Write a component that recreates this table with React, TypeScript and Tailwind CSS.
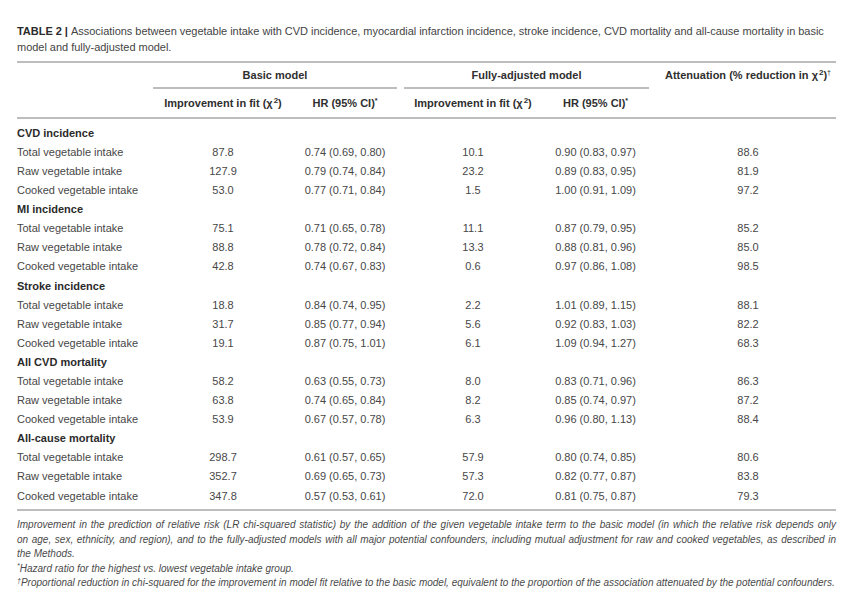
import React from 'react';

type Row = { label: string; bImp: string; bHr: string; fImp: string; fHr: string; att: string };
type Group = { title: string; rows: Row[] };

const GROUPS: Group[] = [
  {
    title: 'CVD incidence',
    rows: [
      { label: 'Total vegetable intake', bImp: '87.8', bHr: '0.74 (0.69, 0.80)', fImp: '10.1', fHr: '0.90 (0.83, 0.97)', att: '88.6' },
      { label: 'Raw vegetable intake', bImp: '127.9', bHr: '0.79 (0.74, 0.84)', fImp: '23.2', fHr: '0.89 (0.83, 0.95)', att: '81.9' },
      { label: 'Cooked vegetable intake', bImp: '53.0', bHr: '0.77 (0.71, 0.84)', fImp: '1.5', fHr: '1.00 (0.91, 1.09)', att: '97.2' },
    ],
  },
  {
    title: 'MI incidence',
    rows: [
      { label: 'Total vegetable intake', bImp: '75.1', bHr: '0.71 (0.65, 0.78)', fImp: '11.1', fHr: '0.87 (0.79, 0.95)', att: '85.2' },
      { label: 'Raw vegetable intake', bImp: '88.8', bHr: '0.78 (0.72, 0.84)', fImp: '13.3', fHr: '0.88 (0.81, 0.96)', att: '85.0' },
      { label: 'Cooked vegetable intake', bImp: '42.8', bHr: '0.74 (0.67, 0.83)', fImp: '0.6', fHr: '0.97 (0.86, 1.08)', att: '98.5' },
    ],
  },
  {
    title: 'Stroke incidence',
    rows: [
      { label: 'Total vegetable intake', bImp: '18.8', bHr: '0.84 (0.74, 0.95)', fImp: '2.2', fHr: '1.01 (0.89, 1.15)', att: '88.1' },
      { label: 'Raw vegetable intake', bImp: '31.7', bHr: '0.85 (0.77, 0.94)', fImp: '5.6', fHr: '0.92 (0.83, 1.03)', att: '82.2' },
      { label: 'Cooked vegetable intake', bImp: '19.1', bHr: '0.87 (0.75, 1.01)', fImp: '6.1', fHr: '1.09 (0.94, 1.27)', att: '68.3' },
    ],
  },
  {
    title: 'All CVD mortality',
    rows: [
      { label: 'Total vegetable intake', bImp: '58.2', bHr: '0.63 (0.55, 0.73)', fImp: '8.0', fHr: '0.83 (0.71, 0.96)', att: '86.3' },
      { label: 'Raw vegetable intake', bImp: '63.8', bHr: '0.74 (0.65, 0.84)', fImp: '8.2', fHr: '0.85 (0.74, 0.97)', att: '87.2' },
      { label: 'Cooked vegetable intake', bImp: '53.9', bHr: '0.67 (0.57, 0.78)', fImp: '6.3', fHr: '0.96 (0.80, 1.13)', att: '88.4' },
    ],
  },
  {
    title: 'All-cause mortality',
    rows: [
      { label: 'Total vegetable intake', bImp: '298.7', bHr: '0.61 (0.57, 0.65)', fImp: '57.9', fHr: '0.80 (0.74, 0.85)', att: '80.6' },
      { label: 'Raw vegetable intake', bImp: '352.7', bHr: '0.69 (0.65, 0.73)', fImp: '57.3', fHr: '0.82 (0.77, 0.87)', att: '83.8' },
      { label: 'Cooked vegetable intake', bImp: '347.8', bHr: '0.57 (0.53, 0.61)', fImp: '72.0', fHr: '0.81 (0.75, 0.87)', att: '79.3' },
    ],
  },
];

// columnas: etiqueta | basic imp | basic HR | hueco | fully imp | fully HR | hueco | atenuación
const COLS = 'grid grid-cols-[136px_140px_104px_7px_138px_107px_11px_176px]';

const Sq = () => <sup className="text-[8px] relative -top-[4px] ml-[1px]">2</sup>;

function Rule() {
  return <div className="h-[2px] w-[819px] bg-[#bdbdbd]" />;
}

export default function App() {
  return (
    <div className="relative w-[865px] h-[603px] bg-white overflow-hidden font-['Liberation_Sans',Arial,sans-serif] text-[#3d3d3d]">
      <div className="pl-[17px] pt-[23px]">
        {/* ── Título ── */}
        <div className="text-[11px] leading-[16px] text-[#444] h-[38px] tracking-[-0.03px]">
          <span className="font-bold text-[#2b2b2b]">TABLE 2 | </span>
          Associations between vegetable intake with CVD incidence, myocardial infarction incidence, stroke incidence, CVD mortality and all-cause mortality in basic
          <br />
          model and fully-adjusted model.
        </div>

        <Rule />

        {/* ── Cabecera ── */}
        <div className={`${COLS} text-[11px] font-bold text-[#2f2f2f]`}>
          <div />
          <div className="col-span-2 h-[24px] flex items-center justify-center">Basic model</div>
          <div />
          <div className="col-span-2 h-[24px] flex items-center justify-center">Fully-adjusted model</div>
          <div />
          <div className="h-[24px] flex items-center justify-center">
            <span>
              Attenuation (% reduction in χ<Sq />)
              <sup className="text-[7px] font-normal">†</sup>
            </span>
          </div>

          <div />
          <div className="col-span-2 h-[2px] bg-[#bdbdbd]" />
          <div />
          <div className="col-span-2 h-[2px] bg-[#bdbdbd]" />
          <div />
          <div />

          <div />
          <div className="h-[28px] flex items-center justify-center">
            <span>Improvement in fit (χ<Sq />)</span>
          </div>
          <div className="h-[28px] flex items-center justify-center">
            <span>HR (95% CI)<sup className="text-[7px]">*</sup></span>
          </div>
          <div />
          <div className="h-[28px] flex items-center justify-center">
            <span>Improvement in fit (χ<Sq />)</span>
          </div>
          <div className="h-[28px] flex items-center justify-center">
            <span>HR (95% CI)<sup className="text-[7px]">*</sup></span>
          </div>
          <div />
          <div />
        </div>

        <Rule />

        {/* ── Cuerpo ── */}
        <div className="pt-[4.5px] pb-[4px] text-[11px]">
          {GROUPS.map((g) => (
            <div key={g.title}>
              <div className="h-[19.1px] flex items-center font-bold text-[#2b2b2b]">{g.title}</div>
              {g.rows.map((r) => (
                <div key={r.label} className={`${COLS} h-[19.1px] items-center text-[#474747]`}>
                  <div>{r.label}</div>
                  <div className="text-center">{r.bImp}</div>
                  <div className="text-center">{r.bHr}</div>
                  <div />
                  <div className="text-center">{r.fImp}</div>
                  <div className="text-center">{r.fHr}</div>
                  <div />
                  <div className="text-center">{r.att}</div>
                </div>
              ))}
            </div>
          ))}
        </div>

        <Rule />

        {/* ── Notas ── */}
        <div className="w-[819px] pt-[7px] text-[10px] leading-[14.5px] italic text-[#4a4a4a]">
          <div className="text-justify [text-align-last:justify]">
            Improvement in the prediction of relative risk (LR chi-squared statistic) by the addition of the given vegetable intake term to the basic model (in which the relative risk depends only
          </div>
          <div className="text-justify [text-align-last:justify]">
            on age, sex, ethnicity, and region), and to the fully-adjusted models with all major potential confounders, including mutual adjustment for raw and cooked vegetables, as described in
          </div>
          <div>the Methods.</div>
          <div>
            <sup className="text-[7px]">*</sup>Hazard ratio for the highest vs. lowest vegetable intake group.
          </div>
          <div>
            <sup className="text-[7px]">†</sup>Proportional reduction in chi-squared for the improvement in model fit relative to the basic model, equivalent to the proportion of the association attenuated by the potential confounders.
          </div>
        </div>
      </div>
    </div>
  );
}
